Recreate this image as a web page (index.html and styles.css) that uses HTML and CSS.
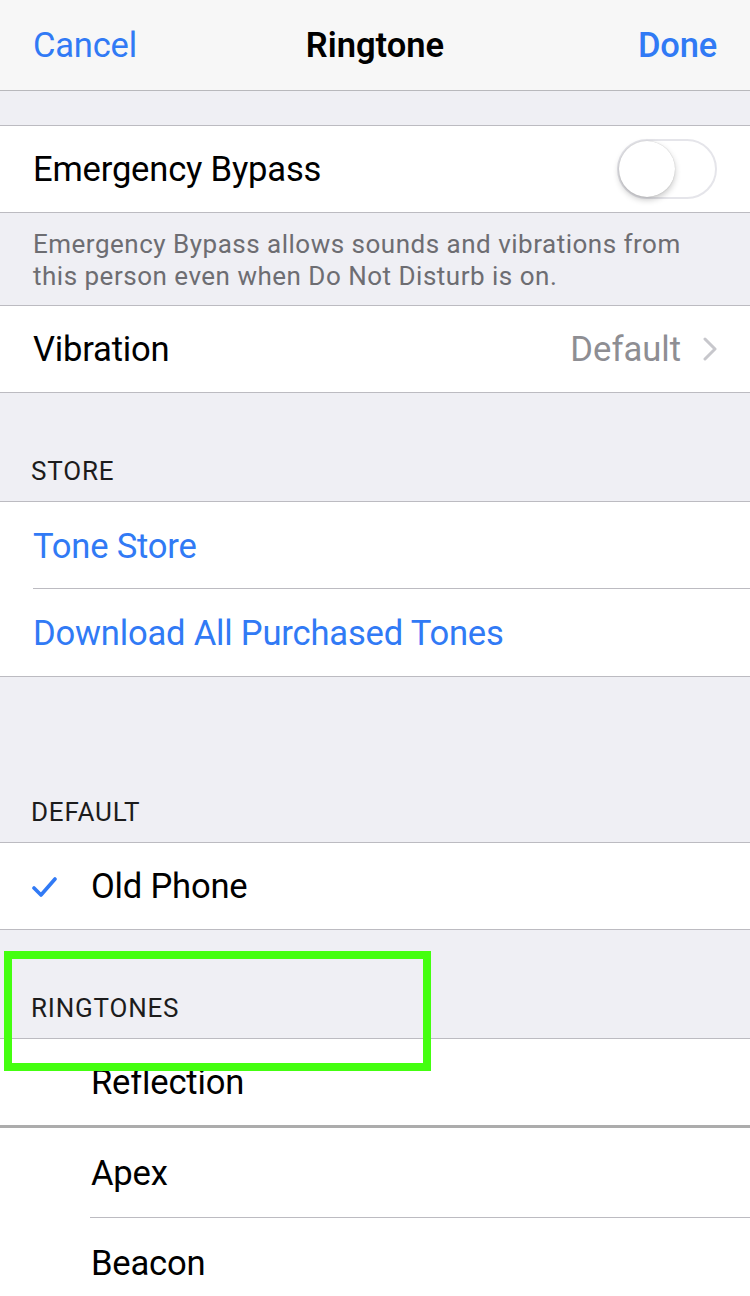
FILE: index.html
```html
<!DOCTYPE html>
<html>
<head>
<meta charset="utf-8">
<link rel="stylesheet" href="styles.css">
</head>
<body>
<div class="screen">
  <header class="nav">
    <span class="nav-btn">Cancel</span>
    <span class="nav-title">Ringtone</span>
    <span class="nav-btn done">Done</span>
  </header>
  <div class="spacer s34"></div>
  <div class="group">
    <div class="row">
      <span class="label">Emergency Bypass</span>
      <span class="toggle"><span class="knob"></span></span>
    </div>
  </div>
  <div class="footnote">Emergency Bypass allows sounds and vibrations from this person even when Do Not Disturb is on.</div>
  <div class="group">
    <div class="row">
      <span class="label">Vibration</span>
      <span class="detail">Default
        <svg class="chev" width="14" height="24" viewBox="0 0 14 24"><path d="M2 2 L12 12 L2 22" fill="none" stroke="#c7c7cc" stroke-width="3" stroke-linecap="round" stroke-linejoin="round"/></svg>
      </span>
    </div>
  </div>
  <div class="spacer s56"></div>
  <div class="section-head">STORE</div>
  <div class="group">
    <div class="row link inset"><span class="label">Tone Store</span></div>
    <div class="row link tall"><span class="label">Download All Purchased Tones</span></div>
  </div>
  <div class="spacer s113"></div>
  <div class="section-head">DEFAULT</div>
  <div class="group">
    <div class="row tone">
      <svg class="check" width="26" height="22" viewBox="0 0 26 22"><path d="M2 12 L9 19 L23 3" fill="none" stroke="#317af5" stroke-width="3.6" stroke-linecap="round" stroke-linejoin="round"/></svg>
      <span class="label">Old Phone</span>
    </div>
  </div>
  <div class="spacer s56"></div>
  <div class="section-head">RINGTONES</div>
  <div class="group">
    <div class="row tone thick"><span class="label">Reflection</span></div>
    <div class="row tone inset90"><span class="label">Apex</span></div>
    <div class="row tone last"><span class="label">Beacon</span></div>
  </div>
  <div class="highlight"></div>
</div>
</body>
</html>
```

FILE: styles.css
```css
* { box-sizing: border-box; }
html, body { margin: 0; padding: 0; }
body {
  width: 750px;
  height: 1296px;
  overflow: hidden;
  background: #efeff4;
  font-family: Roboto, "Liberation Sans", sans-serif;
  color: #000;
}
.screen { position: relative; width: 750px; height: 1296px; }

.nav {
  height: 91px;
  background: #f7f7f7;
  border-bottom: 1px solid #b8b8bc;
  display: flex;
  align-items: center;
  justify-content: space-between;
  padding: 0 33px 0 33px;
  position: relative;
}
.nav-btn { font-size: 34.5px; color: #317af5; letter-spacing: -0.2px; }
.nav-btn.done { font-weight: 500; }
.nav-title {
  position: absolute;
  left: 0; right: 0;
  text-align: center;
  font-size: 34.5px;
  font-weight: 600;
  pointer-events: none;
}
.spacer { height: 34px; }
.s34 { height: 34px; }
.s56 { height: 56px; }
.s113 { height: 113px; }

.group {
  background: #fff;
  border-top: 1px solid #bcbbc1;
  border-bottom: 1px solid #bcbbc1;
}
.row {
  height: 86px;
  display: flex;
  align-items: center;
  padding: 0 33px;
  font-size: 34.6px;
  position: relative;
}
.row .label { flex: 1; letter-spacing: -0.2px; }
.row.link .label { color: #317af5; }
.row.tall { height: 87px; }
.row.inset::after,
.row.inset90::after {
  content: "";
  position: absolute;
  left: 33px; right: 0; bottom: 0;
  border-bottom: 1px solid #bcbbc1;
}
.row.inset { height: 87px; }
.row.inset90 { height: 90px; }
.row.inset90::after { left: 90px; }
.row.tone { padding-left: 91px; }
.row.thick { height: 89px; border-bottom: 3px solid #acacac; }
.row.last { height: 90px; }
.check { position: absolute; left: 32px; top: 33px; }

.toggle {
  width: 100px;
  height: 60px;
  border-radius: 30px;
  border: 2px solid #e5e5ea;
  background: #fff;
  position: relative;
}
.knob {
  position: absolute;
  left: 0; top: 0;
  width: 56px; height: 56px;
  border-radius: 50%;
  background: #fff;
  box-shadow: 0 3px 6px rgba(0,0,0,0.22), 0 0 1px rgba(0,0,0,0.25);
}

.footnote {
  padding: 15px 33px 13px;
  font-size: 26px;
  line-height: 32px;
  letter-spacing: 0.5px;
  color: #6d6d72;
  height: 92px;
}

.detail {
  display: flex;
  align-items: center;
  gap: 22px;
  color: #8e8e93;
}
.chev { display: block; }

.section-head {
  height: 52px;
  padding: 8px 31px 16px;
  font-size: 26px;
  line-height: 28px;
  letter-spacing: 0.8px;
  color: #1c1c1c;
}

.highlight {
  position: absolute;
  left: 4px;
  top: 951px;
  width: 427px;
  height: 120px;
  border: 8px solid #44ff10;
}
```
